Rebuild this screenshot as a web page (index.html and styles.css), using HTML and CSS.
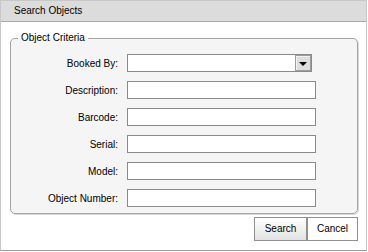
FILE: index.html
```html
<!DOCTYPE html>
<html>
<head>
<meta charset="utf-8">
<link rel="stylesheet" href="styles.css">
</head>
<body>
<div class="dialog">
  <div class="header">Search Objects</div>
  <div class="body">
    <fieldset class="criteria">
      <legend class="legend">Object Criteria</legend>
      <div class="rows">
        <div class="row">
          <span class="label">Booked By:</span>
          <div class="select"><span class="select-value"></span><span class="select-btn"><span class="tri"></span></span></div>
        </div>
        <div class="row"><span class="label">Description:</span><span class="input"></span></div>
        <div class="row"><span class="label">Barcode:</span><span class="input"></span></div>
        <div class="row"><span class="label">Serial:</span><span class="input"></span></div>
        <div class="row"><span class="label">Model:</span><span class="input"></span></div>
        <div class="row"><span class="label">Object Number:</span><span class="input"></span></div>
      </div>
    </fieldset>
    <div class="actions">
      <span class="btn btn-primary">Search</span><span class="btn">Cancel</span>
    </div>
  </div>
</div>
</body>
</html>
```
FILE: styles.css
```css
html, body {
  margin: 0;
  padding: 0;
  background: #ffffff;
}
body {
  font-family: "Liberation Sans", Arial, sans-serif;
  font-size: 10px;
  color: #000;
}
.dialog {
  width: 367px;
  height: 251px;
  box-sizing: border-box;
  border: 1px solid #c8c8c8;
  border-bottom-color: #9a9a9a;
  background: #fff;
  display: flex;
  flex-direction: column;
}
.header {
  height: 20px;
  line-height: 20px;
  background: #dcdcdc;
  border-bottom: 1px solid #a9a9a9;
  padding-left: 13px;
  color: #000;
}
.body {
  display: flex;
  flex-direction: column;
  padding: 10px 8px 0 9px;
}
.criteria {
  margin: 0;
  padding: 10px 0 6px 0;
  border: 1px solid #a4a4a4;
  border-radius: 5px;
  background: #f5f5f5;
  box-shadow: 1px 1px 0 #dadada;
  width: 348px;
  box-sizing: border-box;
}
.legend {
  margin-left: 7px;
  padding: 0 3px;
  line-height: 12px;
  color: #000;
}
.rows {
  display: flex;
  flex-direction: column;
  gap: 9px;
}
.row {
  display: flex;
  align-items: center;
  gap: 9px;
  height: 18px;
}
.label {
  width: 107px;
  text-align: right;
  flex: none;
}
.input {
  width: 189px;
  height: 18px;
  box-sizing: border-box;
  border: 1px solid #8a8a8a;
  background: #fff;
  flex: none;
}
.select {
  width: 185px;
  height: 18px;
  box-sizing: border-box;
  border: 1px solid #8a8a8a;
  background: #fff;
  display: flex;
  justify-content: flex-end;
  flex: none;
}
.select-value {
  flex: 1;
}
.select-btn {
  width: 16px;
  height: 16px;
  box-sizing: border-box;
  border: 1px solid #9c9c9c;
  box-shadow: inset 1px 1px 0 #f4f4f4;
  background: #dedede;
  display: flex;
  align-items: center;
  justify-content: center;
}
.tri {
  width: 0;
  height: 0;
  border-left: 4px solid transparent;
  border-right: 4px solid transparent;
  border-top: 4px solid #000;
  margin-top: 1px;
}
.actions {
  display: flex;
  justify-content: flex-end;
  margin-top: 3px;
}
.btn {
  height: 24px;
  box-sizing: border-box;
  line-height: 22px;
  border: 1px solid #8f8f8f;
  background: #fff;
  text-align: center;
  color: #000;
  width: 51px;
}
.btn-primary {
  width: 53px;
  background: linear-gradient(#ffffff, #e2e2e2);
}
```
